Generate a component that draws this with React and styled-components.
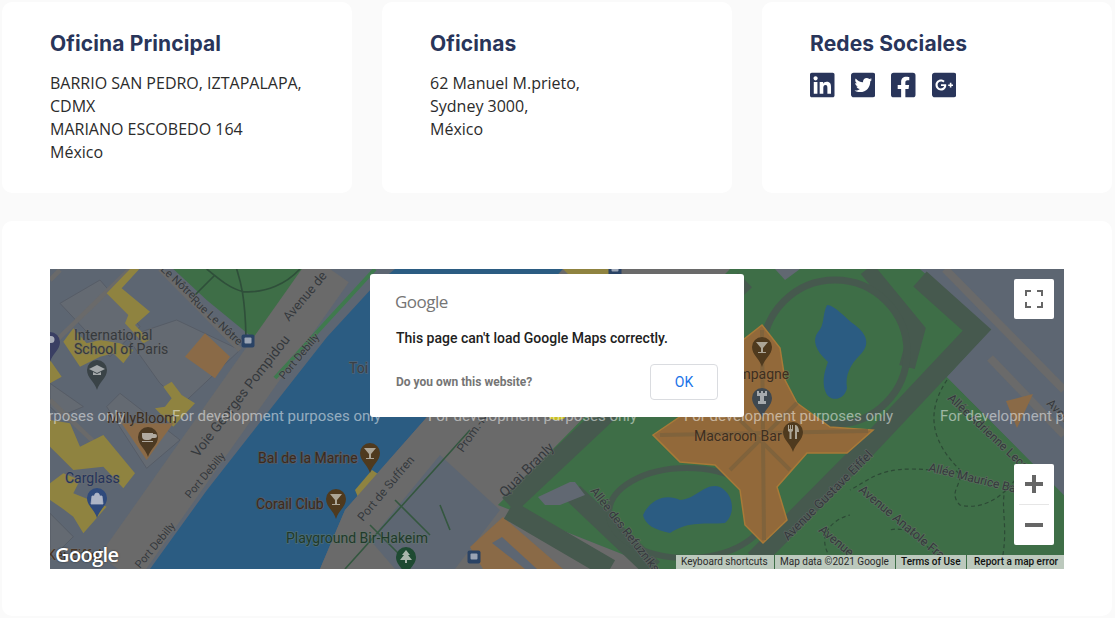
import React from 'react';
import styled, { createGlobalStyle } from 'styled-components';
import { FaLinkedin, FaTwitterSquare, FaFacebookSquare, FaGooglePlusSquare } from 'react-icons/fa';

const GlobalStyle = createGlobalStyle`
  html, body { margin: 0; padding: 0; background: #fafafa; }
  body { font-family: "Open Sans", "Liberation Sans", sans-serif; overflow: hidden; }
`;

const Page = styled.div`
  padding: 2px 3px 2px 2px;
  display: flex;
  flex-direction: column;
  gap: 28px;
`;
const CardRow = styled.div`
  display: grid;
  grid-template-columns: repeat(3, 350px);
  gap: 30px;
`;
const InfoCard = styled.section`
  background: #fff;
  border-radius: 10px;
  height: 191px;
  box-sizing: border-box;
  padding: 27px 48px 0;
`;
const CardTitle = styled.h3`
  margin: 0 0 13px;
  font-family: Inter, "Liberation Sans", sans-serif;
  font-weight: 700;
  font-size: 21px;
  line-height: 30px;
  letter-spacing: 0.12px;
  color: #29355a;
`;
const Address = styled.p`
  margin: 0;
  font-size: 16px;
  line-height: 23px;
  color: #2b2b2b;
`;
const SocialRow = styled.div`
  display: flex;
  gap: 16px;
  color: #29355a;
  font-size: 28px;
  line-height: 0;
  margin-top: -1px;
  svg { width: 24.5px; height: 28px; }
`;
const MapCard = styled.section`
  background: #fff;
  border-radius: 10px;
  padding: 48px 48px 47px;
`;
const MapFrame = styled.div`
  position: relative;
  height: 300px;
  overflow: hidden;
  background: #5d6672;
  font-family: Roboto, "Liberation Sans", sans-serif;
`;
const MapCanvas = styled.svg`
  display: block;
  width: 100%;
  height: 100%;
`;
const MapText = styled.text`
  font-family: Roboto, "Liberation Sans", sans-serif;
  font-size: ${p => p.$size || 14}px;
  fill: ${p => p.$color || '#35393d'};
  paint-order: stroke;
  stroke: ${p => p.$halo || 'rgba(110,110,110,0.55)'};
  stroke-width: 1.5px;
`;
const Watermark = styled.text`
  font-family: Roboto, "Liberation Sans", sans-serif;
  font-size: 15px;
  fill: rgba(255, 255, 255, 0.5);
`;
const MapLogo = styled.div`
  position: absolute;
  left: 5px;
  bottom: 1px;
  font-family: "Open Sans", sans-serif;
  font-size: 20px;
  font-weight: 600;
  letter-spacing: -0.6px;
  line-height: 26px;
  color: #fff;
  text-shadow: 0 0 2px rgba(0, 0, 0, 0.6);
`;
const Dialog = styled.div`
  position: absolute;
  left: 320px;
  top: 5px;
  width: 374px;
  height: 143px;
  box-sizing: border-box;
  background: #fff;
  border-radius: 3px;
  padding: 16px 26px 0;
  display: flex;
  flex-direction: column;
`;
const DialogLogo = styled.div`
  font-family: "Open Sans", sans-serif;
  font-size: 17px;
  line-height: 24px;
  letter-spacing: -0.5px;
  color: #757575;
  margin-left: -1px;
`;
const DialogMessage = styled.div`
  margin-top: 14px;
  font-weight: 500;
  font-size: 14px;
  line-height: 20px;
  color: #212121;
`;
const DialogFooter = styled.div`
  margin-top: 16px;
  display: flex;
  align-items: center;
  justify-content: space-between;
`;
const OwnerLink = styled.span`
  font-size: 12px;
  font-weight: 700;
  color: #757575;
`;
const OkButton = styled.button`
  width: 68px;
  height: 36px;
  background: #fff;
  border: 1px solid #dadce0;
  border-radius: 4px;
  font: 400 14px Roboto, sans-serif;
  color: #1a73e8;
  padding: 0;
`;
const ControlBox = styled.div`
  position: absolute;
  right: 10px;
  width: 40px;
  background: #fff;
  border-radius: 2px;
  display: flex;
  flex-direction: column;
  align-items: center;
  justify-content: center;
`;
const FullscreenBox = styled(ControlBox)`
  top: 10px;
  height: 40px;
`;
const ZoomBox = styled(ControlBox)`
  bottom: 24px;
  height: 81px;
`;
const ZoomStep = styled.div`
  height: 40px;
  display: flex;
  align-items: center;
  justify-content: center;
`;
const ZoomDivider = styled.div`
  width: 30px;
  height: 1px;
  background: #e6e6e6;
`;
const Attribution = styled.div`
  position: absolute;
  right: 0;
  bottom: 0;
  display: flex;
  height: 14px;
  font-size: 10px;
  line-height: 14px;
  gap: 1px;
`;
const AttributionItem = styled.span`
  background: #bcc9bd;
  color: ${p => (p.$strong ? '#111' : '#2a2a2a')};
  font-weight: ${p => (p.$strong ? 500 : 400)};
  width: ${p => p.$width}px;
  box-sizing: border-box;
  padding-left: ${p => p.$pad || 5}px;
  white-space: nowrap;
`;

const YELLOW = '#8f8340';
const ORANGE = '#8a6a47';
const WATER = '#2b5c82';
const PARK = '#3e6e47';
const PATH = '#46594e';
const ROAD = '#6a6a6a';
const BLOCK = '#5d6672';

// traced from the 3x crops, so they are in crop coordinates
const LEFT_YELLOW = [
  '200,100 270,27 298,27 245,85 330,155 285,195 328,240 310,250 255,190 265,165',
  '70,245 100,205 140,250 180,240 240,250 280,270 250,310 220,280 180,290 120,320',
  '30,300 65,350 30,370',
  '370,380 395,365 425,405 465,430 400,500 345,445 375,440 395,415',
  '30,480 90,490 120,560 190,525 285,640 250,685 190,620 100,630 70,600 30,560',
  '30,670 70,640 120,660 100,700 200,740 130,820 100,770 60,740 30,720',
];
const LEFT_BLOCKS = [
  '60,130 180,60 300,200 210,290',
  '260,230 410,180 600,270 430,430 360,370',
  '30,370 130,440 60,470 30,440',
  '200,440 240,400 420,540 320,625',
  '30,760 100,830 30,900',
];

const GLYPHS = {
  parking: <path d="M-3-6h4a3.5 3.5 0 0 1 0 7h-2v5h-2z" fill="#a9adb8" />,
  cap: <path d="M0-5l8 4-8 4-8-4zM-4 2v3h8V2L0 4z" fill="#a4a8aa" />,
  cup: <path d="M-6-4H5v1h2a2 2 0 0 1 0 4H4a4 4 0 0 1-4 2h-2a4 4 0 0 1-4-4zM-6 4H5v1H-6z" fill="#b0aaa0" />,
  bag: <path d="M-5-2h10l1 8H-6zM-2.5-2a2.5 3 0 0 1 5 0" fill="#aeb5c6" stroke="#aeb5c6" strokeWidth="0.8" />,
  martini: <path d="M-6-5H6L1 1v4h3v1h-8V5h3V1z" fill="#aca596" />,
  tree: <path d="M0-7l4 5H2l4 5H1v3h-2V3h-5l4-5h-2z" fill="#a9b6ac" />,
  chess: <path d="M-5-7h2v2h2v-2h2v2h2v-2h2v5H2v5h2v3h-8V3h2v-5h-3z" fill="#a6aaae" />,
  fork: <path d="M-5-7h1v4h1v-4h1v4h1v-4h1v6l-1.500 1v7h-2V0L-5-1zM3-7c2 1 3 4 3 7H4v7H2V-7z" fill="#aca596" />,
};

const PINS = [
  { x: 50, y: 342, color: '#3a3f63', glyph: 'parking' },
  { x: 97, y: 370, color: '#3a4347', glyph: 'cap' },
  { x: 148, y: 437, color: '#4c3a23', glyph: 'cup' },
  { x: 97, y: 498, color: '#2f4a7c', glyph: 'bag' },
  { x: 370, y: 453, color: '#4f3a1e', glyph: 'martini' },
  { x: 336, y: 499, color: '#4f3a1e', glyph: 'martini' },
  { x: 406, y: 557, color: '#1e4a32', glyph: 'tree' },
  { x: 762, y: 347, color: '#4f3a1e', glyph: 'martini' },
  { x: 762, y: 398, color: '#3f4850', glyph: 'chess' },
  { x: 793, y: 432, color: '#4f3a1e', glyph: 'fork' },
];

const LABELS = [
  { t: 'Le Nôtre', x: 160, y: 270, r: 43, s: 11.5 },
  { t: 'Rue Le Nôtre', x: 190, y: 301, r: 43, s: 11.5 },
  { t: 'Avenue de', x: 289, y: 322, r: -50, s: 13 },
  { t: 'Voie Georges Pompidou', x: 198, y: 458, r: -52, s: 14 },
  { t: 'Port Debilly', x: 284, y: 380, r: -50, s: 11 },
  { t: 'Port Debilly', x: 190, y: 499, r: -50, s: 11 },
  { t: 'Port Debilly', x: 140, y: 569, r: -50, s: 11 },
  { t: 'International', x: 74, y: 340 },
  { t: 'School of Paris', x: 74, y: 354 },
  { t: 'MillyBloom', x: 107, y: 423, c: '#3a2c20' },
  { t: 'Carglass', x: 65, y: 483, c: '#24335c' },
  { t: 'Toi', x: 349, y: 373, c: '#3a3f45' },
  { t: 'Kei Eiffel', x: 47, y: 560, c: '#4a3524' },
  { t: 'Bal de la Marine', x: 258, y: 463, c: '#3a2a1f', h: 'rgba(120,90,70,0.6)' },
  { t: 'Corail Club', x: 256, y: 509, c: '#3a2a1f', h: 'rgba(120,90,70,0.6)' },
  { t: 'Playground Bir-Hakeim', x: 286, y: 543, c: '#1f3a2a', h: 'rgba(100,120,110,0.6)' },
  { t: 'Port de Suffren', x: 363, y: 522, r: -50, s: 12 },
  { t: 'Prom.-N', x: 463, y: 453, r: -55, s: 12 },
  { t: 'Quai Branly', x: 505, y: 498, r: -45, s: 14 },
  { t: 'Allée des Refuzniks', x: 590, y: 491, r: 52, s: 12 },
  { t: 'Champagne', x: 714, y: 379, c: '#3d2f20', h: 'rgba(150,110,70,0.5)' },
  { t: 'Macaroon Bar', x: 694, y: 441, c: '#3d2f20', h: 'rgba(150,110,70,0.5)' },
  { t: 'Allée Adrienne Lecouvreur', x: 947, y: 399, r: 43, s: 12 },
  { t: 'Allée Maurice Baumont', x: 928, y: 471, r: 14, s: 12 },
  { t: 'Avenue Gustave Eiffel', x: 788, y: 541, r: -45, s: 12.5 },
  { t: 'Avenue Anatole France', x: 858, y: 491, r: 40, s: 12.5 },
  { t: 'Avenue', x: 818, y: 531, r: 40, s: 12.5 },
  { t: 'Avenue', x: 1046, y: 404, r: 45, s: 12 },
];

function MapPin({ x, y, color, glyph }) {
  return (
    <g transform={`translate(${x} ${y})`}>
      <path d="M0 20 C-2 12 -10 8 -10 0 A10 10 0 0 1 10 0 C10 8 2 12 0 20Z" fill={color} />
      {GLYPHS[glyph]}
    </g>
  );
}

function BusStop({ x, y }) {
  return (
    <g transform={`translate(${x} ${y})`}>
      <rect x="-6.500" y="-6.500" width="13" height="13" rx="2" fill="#2a4365" />
      <rect x="-3.500" y="-3.500" width="7" height="6" rx="1" fill="#9aa4b4" />
    </g>
  );
}

function StreetMap() {
  return (
    <MapCanvas viewBox="50 269 1014 300">
      <rect x="50" y="269" width="1014" height="300" fill={BLOCK} />

      {/* left bank */}
      <g transform="translate(40 260) scale(0.3333)">
        <polygon points="400,27 800,27 640,235 500,120" fill={PARK} />
        <path d="M500 27 C540 60 570 85 610 95 C680 100 740 70 780 27 M590 27 C600 60 615 100 618 230 M525 45 L465 105" fill="none" stroke="#2f4f3a" strokeWidth="5" />
        {LEFT_BLOCKS.map(points => (
          <polygon key={points} points={points} fill="#646a72" stroke="#565c66" strokeWidth="3" />
        ))}
        <path d="M270 27 L30 260 M30 420 L260 640 M60 30 L30 60 M360 27 L600 270" fill="none" stroke={ROAD} strokeWidth="14" />
        {LEFT_YELLOW.map(points => (
          <polygon key={points} points={points} fill={YELLOW} />
        ))}
        <polygon points="435,290 495,220 570,290 525,355 470,315" fill={ORANGE} />
        <polygon points="245,490 400,490 320,600" fill={ORANGE} />
      </g>

      {/* the avenue along the river */}
      <path d="M118 569 L330 269" stroke={ROAD} strokeWidth="46" fill="none" />
      <path d="M275 378 L375 269" stroke="#3f7a4e" strokeWidth="4" fill="none" />
      <polygon points="150,569 207,490 327,337 373,287 395,269 563,269 427,417 345,510 320,569" fill={WATER} />
      <polygon points="355,490 372,470 378,474 360,502" fill={YELLOW} />

      {/* right bank, the quai */}
      <polygon points="320,569 345,510 427,417 563,269 760,269 498,505 660,569" fill={ROAD} />
      <polygon points="370,540 440,455 500,510 455,569 395,569" fill={BLOCK} />
      <path d="M345 569 L470 430 M395 500 L430 535 M370 525 L400 555 M440 505 L450 530" stroke="#34573f" strokeWidth="1.6" fill="none" />
      <polygon points="470,547 503,517 563,569 483,569" fill={ORANGE} />
      <polygon points="492,543 502,537 537,569 525,569" fill={BLOCK} />
      <polygon points="563,269 612,269 618,274 568,274" fill={YELLOW} />
      <ellipse cx="557" cy="417" rx="8" ry="3" fill="#c9c020" />

      {/* Champ de Mars */}
      <polygon points="498,505 730,269 920,269 990,330 947,377 1064,495 1064,569 660,569" fill={PARK} />
      <polygon points="920,269 1064,269 1064,495 947,377 990,330" fill={BLOCK} />
      <path d="M1064 435 L990 358 M945 269 L1064 390" stroke={ROAD} strokeWidth="8" fill="none" />
      <polygon points="1006,401 1033,394 1017,428" fill={ORANGE} />
      <path d="M509 505 L610 410 L745 280 M509 510 L610 569 M920 279 L977 330 L865 449 L755 560 M573 493 L653 569" stroke={PATH} strokeWidth="20" fill="none" />
      <path d="M867 269 L917 330 L907 367" stroke={PATH} strokeWidth="16" fill="none" />
      <ellipse cx="687" cy="513" rx="78" ry="45" fill="none" stroke={PATH} strokeWidth="6" />
      <ellipse cx="835" cy="352" rx="72" ry="72" fill="none" stroke={PATH} strokeWidth="7" />
      <polygon points="538,497 570,482 575,482 585,495 560,505 545,505" fill="#616872" />
      <polygon points="775,269 800,269 785,280" fill="#616872" />

      {/* ponds */}
      <path d="M643 515 C650 500 665 493 680 500 C695 500 705 482 720 487 C735 495 735 515 725 523 C705 525 690 520 670 533 C655 530 645 525 643 515Z" fill={WATER} />
      <path d="M827 305 C835 305 845 318 855 325 C868 335 870 345 860 355 C850 365 845 375 847 388 C845 398 835 402 828 396 C820 385 825 370 828 362 C815 350 812 340 818 332 C825 325 822 315 827 305Z" fill={WATER} />

      {/* Eiffel tower */}
      <polygon points="762,325 780,348 785,380 797,403 830,427 873,430 847,453 807,453 777,487 787,520 763,543 745,525 740,490 715,465 680,462 653,435 690,410 725,400 740,375 743,340" fill="#92693a" stroke="#a87a38" strokeWidth="1.500" />
      <path d="M762 330 L764 540 M660 435 L868 431 M715 395 L790 470 M797 403 L730 470" stroke="#80633c" strokeWidth="4" fill="none" />

      <path d="M930 470 C880 465 870 480 850 490 M947 380 C920 420 940 450 960 470 M1015 480 C1000 500 980 510 960 505 C945 490 970 480 955 470 M840 569 C810 540 830 520 850 515 M1000 569 C1010 530 1000 510 1005 490 M950 569 C920 540 910 525 890 530" stroke="#2d4a36" strokeWidth="1.200" strokeDasharray="4 3" fill="none" />

      {PINS.map(pin => (
        <MapPin key={`${pin.x}-${pin.y}`} {...pin} />
      ))}
      <BusStop x={248} y={341} />
      <BusStop x={474} y={557} />
      <BusStop x={615} y={269} />

      {LABELS.map(l => (
        <MapText
          key={`${l.t}-${l.x}`}
          x={l.x}
          y={l.y}
          $size={l.s}
          $color={l.c}
          $halo={l.h}
          transform={l.r ? `rotate(${l.r} ${l.x} ${l.y})` : undefined}
        >
          {l.t}
        </MapText>
      ))}

      {[-84, 172, 428, 684, 940].map(x => (
        <Watermark key={x} x={x} y={421}>For development purposes only</Watermark>
      ))}
    </MapCanvas>
  );
}

export default function App() {
  return (
    <Page>
      <GlobalStyle />
      <CardRow>
        <InfoCard>
          <CardTitle>Oficina Principal</CardTitle>
          <Address>
            BARRIO SAN PEDRO, IZTAPALAPA, CDMX<br />
            MARIANO ESCOBEDO 164<br />
            México
          </Address>
        </InfoCard>
        <InfoCard>
          <CardTitle>Oficinas</CardTitle>
          <Address>
            62 Manuel M.prieto,<br />
            Sydney 3000,<br />
            México
          </Address>
        </InfoCard>
        <InfoCard>
          <CardTitle>Redes Sociales</CardTitle>
          <SocialRow>
            <FaLinkedin />
            <FaTwitterSquare />
            <FaFacebookSquare />
            <FaGooglePlusSquare />
          </SocialRow>
        </InfoCard>
      </CardRow>
      <MapCard>
        <MapFrame>
          <StreetMap />
          <MapLogo>Google</MapLogo>
          <Dialog>
            <DialogLogo>Google</DialogLogo>
            <DialogMessage>This page can't load Google Maps correctly.</DialogMessage>
            <DialogFooter>
              <OwnerLink>Do you own this website?</OwnerLink>
              <OkButton>OK</OkButton>
            </DialogFooter>
          </Dialog>
          <FullscreenBox>
            <svg width="18" height="18" viewBox="0 0 18 18" fill="#666">
              <path d="M0 0h6v2H2v4H0zM12 0h6v6h-2V2h-4zM0 12h2v4h4v2H0zM16 12h2v6h-6v-2h4z" />
            </svg>
          </FullscreenBox>
          <ZoomBox>
            <ZoomStep>
              <svg width="18" height="18" viewBox="0 0 18 18" fill="#666">
                <path d="M7 0h4v7h7v4h-7v7H7v-7H0V7h7z" />
              </svg>
            </ZoomStep>
            <ZoomDivider />
            <ZoomStep>
              <svg width="18" height="18" viewBox="0 0 18 18" fill="#666">
                <path d="M0 7h18v4H0z" />
              </svg>
            </ZoomStep>
          </ZoomBox>
          <Attribution>
            <AttributionItem $width={98}>Keyboard shortcuts</AttributionItem>
            <AttributionItem $width={120}>Map data ©2021 Google</AttributionItem>
            <AttributionItem $width={70} $strong>Terms of Use</AttributionItem>
            <AttributionItem $width={97} $pad={7} $strong>Report a map error</AttributionItem>
          </Attribution>
        </MapFrame>
      </MapCard>
    </Page>
  );
}
